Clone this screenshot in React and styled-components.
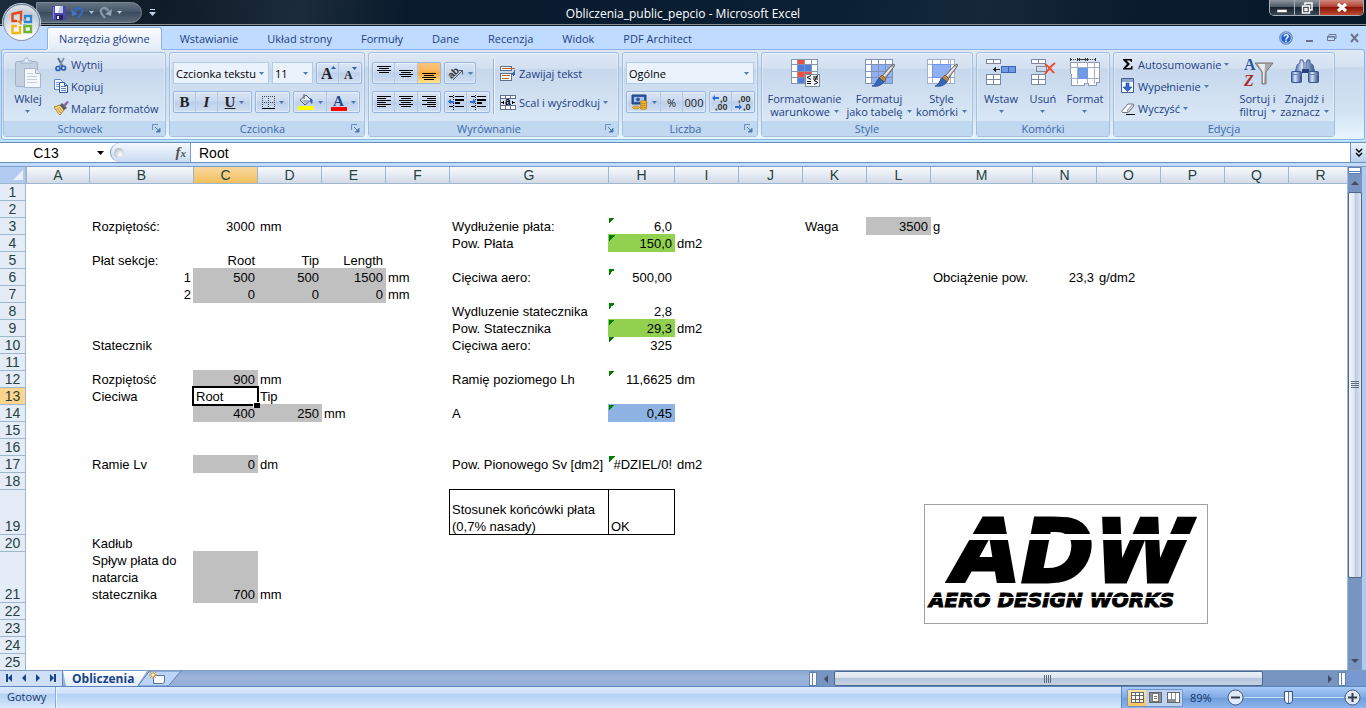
import React from "react";
import styled, { createGlobalStyle, css } from "styled-components";

const GlobalStyle = createGlobalStyle`
  * { box-sizing: border-box; }
  body { margin: 0; background: #fff; }
  button, input, select {
    font-family: inherit;
    font-size: inherit;
    color: inherit;
    margin: 0;
    padding: 0;
    border: 0;
    background: none;
    border-radius: 0;
  }
  svg { display: block; flex: none; }
`

const Window = styled.div`
  display: flex;
  flex-direction: column;
  height: 100vh;
  min-height: 600px;
  overflow: hidden;
  font-family: "Open Sans", "Noto Sans", sans-serif;
  font-size: 11px;
  line-height: 13px;
  color: #1e3f85;
  background: #bfdbff;
`

/* ---------- title bar ---------- */

const TitleBar = styled.header`
  position: relative;
  display: grid;
  grid-template-columns: 1fr auto 1fr;
  align-items: start;
  height: 26px;
  border-bottom: 1px solid #111a22;
  box-shadow: inset 0 -1px #8b8f92;
  background: linear-gradient(100deg, #1d2c3b 0, #0e1b28 12%, #1c2b3a 22%, #081a2c 30%, #0a1f33 60%, #14283a 72%, #081b2d 84%, #071a2c 100%);
`

const OfficeButton = styled.button`
  position: absolute;
  z-index: 2;
  left: 3px;
  top: 4px;
  width: 37px;
  height: 37px;
  display: flex;
  align-items: center;
  justify-content: center;
  border: 1px solid #8393a8;
  border-radius: 50%;
  background: radial-gradient(circle at 50% 95%, #fff 0, #eef2f7 35%, #c3ccd7 70%, #f4f6f9 100%);
  box-shadow: 0 0 0 1px #c9d7e8;
`

const QuickAccess = styled.div`
  display: flex;
  align-items: flex-start;
  padding: 2px 0 0 36px;
`

const QuickPill = styled.div`
  display: flex;
  align-items: center;
  gap: 5px;
  width: 106px;
  height: 21px;
  padding-left: 15px;
  border: 1px solid #7d8892;
  border-radius: 0 11px 11px 0;
  background: linear-gradient(#667584, #46576a 45%, #3b4c5f 50%, #5a6978);
`

const QuickMore = styled.button`
  margin: 7px 0 0 7px;
`

const Title = styled.h1`
  margin: 0;
  padding-top: 7px;
  font-size: 12px;
  font-weight: 400;
  line-height: 13px;
  color: #fff;
`

const WindowButtons = styled.div`
  justify-self: end;
  display: flex;
  height: 16px;
  margin-right: 2px;
  border: 1px solid #a7afb8;
  border-top: 0;
  border-radius: 0 0 5px 5px;
  overflow: hidden;
`

const WindowButton = styled.button`
  display: flex;
  align-items: center;
  justify-content: center;
  width: ${p => p.$close ? 43 : 25}px;
  border-right: ${p => p.$close ? 0 : 1}px solid #a7afb8;
  background: ${p => p.$close
    ? 'linear-gradient(#d08a80, #b4402f 45%, #8a1608 50%, #c04a30)'
    : 'linear-gradient(#8d969f, #4c5966 45%, #17232f 50%, #3a4855)'};
`

/* ---------- ribbon ---------- */

const TabBar = styled.nav`
  display: flex;
  align-items: flex-end;
  gap: 1px;
  height: 23px;
  padding: 0 6px 0 47px;
  background: #bfdbff;
`

const Tab = styled.button`
  height: 22px;
  padding: 0 ${p => p.$pad}px;
  ${p => p.$active && css`
    position: relative;
    z-index: 1;
    margin-right: 3px;
    border: 1px solid #8db2e3;
    border-bottom: 0;
    border-radius: 3px 3px 0 0;
    background: linear-gradient(#fafcff, #e3ecf8);
    box-shadow: 0 1px #e3ecf8, inset 1px 1px #fff;
  `}
`

const TabIcons = styled.div`
  display: flex;
  align-items: center;
  gap: 13px;
  height: 22px;
  margin-left: auto;
`

const Ribbon = styled.div`
  display: flex;
  gap: 3px;
  height: 91px;
  margin: 0 1px;
  padding: 2px 1px;
  border: 1px solid #8db2e3;
  border-radius: 3px;
  background: linear-gradient(#e0eaf6, #d5e2f1 18%, #c7d8ed 20%, #d3e3f3 70%, #e7f6fe);
  box-shadow: 0 1px #b4f0f8;
`

const GroupBox = styled.section`
  flex: none;
  display: flex;
  flex-direction: column;
  width: ${p => p.$width}px;
  height: 85px;
  border: 1px solid #a3c0de;
  border-radius: 3px;
  box-shadow: inset 0 0 0 1px #ffffff55;
  background: linear-gradient(#dde8f5, #d3e0f0 18%, #c7d8ed 20%, #d8e7f5 80%);
`

const GroupBody = styled.div`
  flex: 1;
  display: flex;
  padding: 0 3px;
`

const GroupLabel = styled.div`
  display: flex;
  align-items: center;
  justify-content: center;
  height: 15px;
  padding: 0 4px;
  color: #3e6aaa;
  background: #c0d8f0;
  span { flex: 1; text-align: center; }
`

const BigBtn = styled.button`
  display: flex;
  flex-direction: column;
  align-items: center;
  gap: 3px;
  width: ${p => p.$width}px;
  padding-top: 4px;
  line-height: 13px;
  white-space: nowrap;
  color: #1e3f85;
`

const BigLabel = styled.span`
  display: flex;
  flex-direction: column;
  align-items: center;
  span { display: flex; align-items: center; gap: 4px; min-height: 12px; }
`

const SmallList = styled.div`
  display: flex;
  flex-direction: column;
  padding-left: ${p => p.$left}px;
  width: ${p => p.$width}px;
`

const SmallBtn = styled.button`
  display: flex;
  align-items: center;
  gap: ${p => p.$gap || 3}px;
  height: 22px;
  white-space: nowrap;
`

const Rows = styled.div`
  display: flex;
  flex-direction: column;
  gap: 7px;
  padding-top: 9px;
`

const ToolRow = styled.div`
  display: flex;
  gap: 3px;
  height: 22px;
`

const Strip = styled.div`
  display: flex;
  height: 22px;
  border: 1px solid #98b6de;
  border-radius: 2px;
  background: linear-gradient(#dbe6f5, #c9d9ef 45%, #bdd0ea 50%, #cfdff2);
  box-shadow: inset 0 0 0 1px #ffffff66;
`

const ToolBtn = styled.button`
  display: flex;
  align-items: center;
  justify-content: center;
  gap: 4px;
  width: ${p => p.$width || 22}px;
  color: #222;
  ${p => p.$sep && css`border-right: 1px solid #b1c8e6;`}
  ${p => p.$on && css`background: linear-gradient(#f6c480, #fdb55a 40%, #fba537 50%, #ffe58e);`}
`

const Glyph = styled.span`
  font-family: "Liberation Serif", serif;
  font-size: 15px;
  line-height: 16px;
  font-weight: 700;
  font-style: ${p => p.$italic ? 'italic' : 'normal'};
  text-decoration: ${p => p.$under ? 'underline' : 'none'};
  color: #222;
`

const Combo = styled.label`
  display: flex;
  align-items: center;
  width: ${p => p.$width}px;
  height: 22px;
  padding: 0 4px 0 2px;
  border: 1px solid #b3cbe8;
  background: #eaf2fb;
  color: #000;
  select {
    flex: 1;
    min-width: 0;
    appearance: none;
    outline: 0;
    overflow: hidden;
  }
`

const Divider = styled.div`
  width: 1px;
  height: 55px;
  margin: 6px 6px 0 3px;
  background: #9ab4d4;
  box-shadow: 1px 0 #eef5fc;
`

/* ---------- formula bar ---------- */

const FormulaBar = styled.div`
  display: flex;
  height: 21px;
  margin-top: 2px;
  border-top: 1px solid #6b90bc;
  border-bottom: 1px solid #6b90bc;
  background: #fff;
  font-family: "Liberation Sans", Arial, sans-serif;
  font-size: 14px;
  color: #000;
`

const NameBox = styled.label`
  display: flex;
  align-items: center;
  width: 110px;
  padding-right: 6px;
  input { flex: 1; min-width: 0; padding-right: 5px; text-align: center; outline: 0; }
`

const FxBox = styled.div`
  display: flex;
  align-items: center;
  justify-content: space-between;
  width: 81px;
  padding: 0 4px 0 3px;
  border: solid #7f9dc4;
  border-width: 0 1px;
  border-radius: 10px 0 0 10px;
  background: linear-gradient(#f4f8fd, #c9dbf2);
`

const Knob = styled.span`
  width: 10px;
  height: 10px;
  border-radius: 50%;
  background: radial-gradient(circle at 60% 65%, #fff, #b0b8c4 80%);
`

const Fx = styled.button`
  font-family: "Liberation Serif", serif;
  font-style: italic;
  font-weight: 700;
  font-size: 15px;
  color: #555;
  small { font-size: 11px; }
`

const FormulaInput = styled.input`
  flex: 1;
  min-width: 0;
  padding-left: 8px !important;
  outline: 0;
`

const ExpandBtn = styled.button`
  display: flex;
  align-items: center;
  justify-content: center;
  width: 16px;
  border-left: 1px solid #6b90bc !important;
  background: linear-gradient(#eaf2fc, #b9d0ee) !important;
`

/* ---------- sheet ---------- */

const SheetArea = styled.div`
  flex: 1;
  display: flex;
  min-height: 0;
  margin-top: 3px;
  border-top: 1px solid #7f9dc4;
`

const SheetPane = styled.main`
  position: relative;
  flex: 1;
  min-width: 0;
  overflow: hidden;
  background: #fff;
`

const Sheet = styled.table`
  width: 100%;
  min-width: 1352px;
  table-layout: fixed;
  border-collapse: separate;
  border-spacing: 0;
  font-family: "Liberation Sans", Arial, sans-serif;
  font-size: 13px;
  line-height: 17px;
  color: #000;
`

const Col = styled.col`
  width: ${p => p.$width ? p.$width + 'px' : 'auto'};
`

const ColHead = styled.th`
  height: 17px;
  padding: 0;
  font-size: 14px;
  line-height: 16px;
  font-weight: 400;
  color: #27413e;
  border-left: 1px solid #9eb6ce;
  border-bottom: 1px solid #9eb6ce;
  background: ${p => p.$active ? 'linear-gradient(#f9d99f, #f1c15f)' : 'linear-gradient(#f8fafc, #d3dbe9)'};
`

const Corner = styled.th`
  padding: 0;
  border-right: 1px solid #9eb6ce;
  border-bottom: 1px solid #9eb6ce;
  background: #b3cbee;
  svg { margin: 0 2px 0 auto; }
`

const RowHead = styled.th`
  padding: 0;
  vertical-align: bottom;
  font-size: 14px;
  line-height: 16px;
  font-weight: 400;
  color: #27413e;
  border-right: 1px solid #9eb6ce;
  border-bottom: 1px solid #9eb6ce;
  background: ${p => p.$active ? '#ffd58d' : '#e4ecf7'};
`

const fills = { grey: '#c0c0c0', green: '#92d050', blue: '#8db4e3' }

const Cell = styled.td`
  position: ${p => p.$selected ? 'relative' : 'static'};
  height: ${p => p.$height}px;
  padding: 0 2px 0 3px;
  vertical-align: bottom;
  white-space: nowrap;
  text-align: ${p => p.$right ? 'right' : 'left'};
  ${p => p.$fill && css`
    background-color: ${fills[p.$fill]};
    box-shadow: 0 -1px ${fills[p.$fill]}, 1px 0 ${fills[p.$fill]}, 1px -1px ${fills[p.$fill]};
  `}
  ${p => p.$flag && css`
    background-image: linear-gradient(135deg, #008000 50%, transparent 50%);
    background-size: 6px 6px;
    background-position: 1px 0;
    background-repeat: no-repeat;
  `}
  ${p => p.$boxed && css`
    box-shadow: inset 1px 0 #000, 0 -1px #000, inset 0 -1px #000, 1px 0 #000, 1px -1px #000;
  `}
  ${p => p.$selected && css`
    &::before {
      content: "";
      position: absolute;
      inset: -2px -2px -1px -1px;
      border: 2px solid #000;
    }
    &::after {
      content: "";
      position: absolute;
      right: -3px;
      bottom: -3px;
      width: 6px;
      height: 5px;
      border: solid #fff;
      border-width: 1px 0 0 1px;
      background: #000;
    }
  `}
`

const LogoCard = styled.figure`
  position: absolute;
  left: 924px;
  top: 337px;
  width: 284px;
  height: 120px;
  margin: 0;
  padding: 9px 0 0 4px;
  border: 1px solid #a0a0a0;
  background: #fff;
  color: #000;
  font-family: "DejaVu Sans", Verdana, sans-serif;
  font-weight: 700;
  font-style: italic;
  white-space: nowrap;
`

const LogoBig = styled.div`
  position: relative;
  padding-left: 24px;
  font-size: 88px;
  line-height: 76px;
  -webkit-text-stroke: 3px #000;
  &::after {
    content: "";
    position: absolute;
    left: 0;
    right: 2px;
    top: 20px;
    height: 6px;
    background: #fff;
  }
`

const LogoSmall = styled.div`
  position: relative;
  font-size: 20px;
  line-height: 20px;
  -webkit-text-stroke: 1px #000;
  &::after {
    content: "";
    position: absolute;
    left: 0;
    right: 2px;
    top: 7px;
    height: 1px;
    background: #fff;
  }
`

const VScroll = styled.div`
  display: flex;
  flex-direction: column;
  align-items: center;
  width: 19px;
  padding-right: 5px;
  border-left: 1px solid #9fb9dd;
  background: linear-gradient(to right, #7795c0 14px, #b0c9ee 14px);
`

const SplitV = styled.span`
  width: 13px;
  height: 7px;
  border: 1px solid #5f84b4;
  background: linear-gradient(#fff 3px, #5b82b8 3px, #5b82b8 4px, #fff 4px);
`

const ScrollBtn = styled.button`
  display: flex;
  align-items: center;
  justify-content: center;
  width: ${p => p.$side ? 17 : 13}px;
  height: ${p => p.$side ? 15 : 18}px;
`

const VTrack = styled.div`
  flex: 1;
  display: flex;
  width: 14px;
`

const VThumb = styled.div`
  display: flex;
  align-items: center;
  justify-content: center;
  width: 14px;
  height: 84%;
  border: 1px solid #4f6688;
  border-radius: 2px;
  background: linear-gradient(to right, #f3f6fb, #dde6f1 45%, #b9c8de 50%, #dfe7f2);
`

/* ---------- bottom bars ---------- */

const SheetTabs = styled.div`
  display: flex;
  flex: none;
  height: 17px;
  border-top: 1px solid #7f9dc4;
  border-bottom: 1px solid #5d86bd;
  background: linear-gradient(#8aa6d2, #9db5dc 40%, #94aed8);
`

const NavButtons = styled.div`
  display: flex;
  align-items: center;
  justify-content: space-around;
  width: 63px;
  padding: 0 2px;
  border-right: 1px solid #5d86bd;
  background: #cfdff5;
`

const SheetTab = styled.button`
  width: 84px;
  margin-right: -9px !important;
  padding: 0 12px 0 9px !important;
  font-size: 12px !important;
  font-weight: 700;
  line-height: 15px;
  text-align: left;
  color: #16438c !important;
  background: linear-gradient(#fff, #e3edfa) !important;
  clip-path: polygon(0 0, 100% 0, calc(100% - 10px) 100%, 3px 100%);
`

const NewSheet = styled.button`
  display: flex;
`

const HScroll = styled.div`
  display: flex;
  align-items: center;
  width: 537px;
  height: 15px;
  margin-left: auto;
  background: #7795c0;
`

const SplitH = styled.span`
  width: 8px;
  height: 14px;
  border: 1px solid #5f84b4;
  background: linear-gradient(to right, #fff 2px, #5b82b8 2px, #5b82b8 3px, #fff 3px);
`

const HTrack = styled.div`
  flex: 1;
  display: flex;
`

const HThumb = styled.div`
  display: flex;
  align-items: center;
  justify-content: center;
  width: 88%;
  height: 15px;
  border: 1px solid #4f6688;
  border-radius: 2px;
  background: linear-gradient(#eef2f8, #d9e2ee 45%, #b5c5da 50%, #c6d3e4);
`

const CornerGap = styled.div`
  width: 20px;
  background: #7798d0;
`

const StatusBar = styled.footer`
  display: flex;
  flex: none;
  height: 21px;
  color: #16336b;
  background: linear-gradient(#dbe9fb, #cfe1f9 30%, #b3d0f5 34%, #c7defa 75%, #dcebfd);
`

const StatusText = styled.div`
  width: 56px;
  padding-left: 7px;
  line-height: 20px;
  border-right: 1px solid #86abdf;
  box-shadow: 1px 0 #eff6fe;
`

const StatusRight = styled.div`
  display: flex;
  align-items: center;
  margin-left: auto;
  width: 245px;
  padding: 0 5px;
  border-left: 1px solid #5f86bd;
  background: linear-gradient(#a9cbf8, #7ea9e3 50%, #6f9ddb 52%, #8cb5ee);
`

const ViewButtons = styled.div`
  display: flex;
  width: 56px;
  height: 18px;
  border: 1px solid #6f93c7;
  border-radius: 2px;
`

const ViewBtn = styled.button`
  flex: 1;
  display: flex;
  align-items: center;
  justify-content: center;
  background: ${p => p.$on ? 'linear-gradient(#fce2ad, #fdc45c)' : '#bcd3f2'} !important;
`

const ZoomText = styled.span`
  width: 44px;
  padding-left: 7px;
`

const ZoomSlider = styled.input.attrs({ type: 'range' })`
  flex: 1;
  min-width: 0;
  height: 16px;
  appearance: none;
  background: linear-gradient(#c9dcf5, #c9dcf5) center / 100% 1px no-repeat !important;
  &::-webkit-slider-thumb {
    appearance: none;
    width: 9px;
    height: 13px;
    border: 1px solid #35547f;
    border-radius: 1px 1px 5px 5px;
    background: linear-gradient(to right, #fff 3px, #5d80b3 3px, #5d80b3 4px, #dfe9f6 4px);
  }
`

const ZoomBtn = styled.button`
  display: flex;
`

/* ---------- icons ---------- */

const Arrow = ({ color = '#5279b5' }) => (
  <svg width="5" height="3" viewBox="0 0 5 3"><path d="M0 0h5L2.500 3z" fill={color} /></svg>
)

const Launcher = () => (
  <svg width="9" height="9" viewBox="0 0 9 9">
    <path d="M.5 6V.5H6" fill="none" stroke="#6a8fc0" />
    <path d="M3 3l4 4M8 4v4H4" fill="none" stroke="#4f78b0" />
    <path d="M8 4v4H4z" fill="#4f78b0" />
  </svg>
)

const Triangle = ({ dir, color = '#414c62' }) => {
  const d = { up: 'M0 6h8L4 2z', down: 'M0 2h8L4 6z', left: 'M6 0v8L2 4z', right: 'M2 0v8l4-4z' }[dir]
  return <svg width="8" height="8" viewBox="0 0 8 8"><path d={d} fill={color} /></svg>
}

const OfficeLogo = () => (
  <svg width="26" height="26" viewBox="0 0 26 26" fill="none" strokeWidth="2.400">
    <path d="M8 11H3.500V4L12 2v9" stroke="#e2481c" />
    <path d="M16 6h6v6h-6z" stroke="#2f86cf" />
    <path d="M8 16H3.500v7H11v-7" stroke="#f5b617" />
    <path d="M15.500 16H22v6h-6.500z" stroke="#6fb52c" />
    <path d="M8.500 11.500h3v3" stroke="#ef7a1a" strokeWidth="2" />
    <path d="M14 10h3M14 15h3" stroke="#7fb3d8" strokeWidth="1.500" />
  </svg>
)

const SaveIcon = () => (
  <svg width="14" height="14" viewBox="0 0 14 14">
    <path d="M0 0h14v14H1L0 13z" fill="#4c47ad" />
    <path d="M3 0h8v7H3z" fill="#f4f6ff" />
    <path d="M8 0h3v7H6z" fill="#b9c4ea" />
    <path d="M4 9h7v5H4z" fill="#23225e" />
    <path d="M5 10h2v3H5z" fill="#dfe4f5" />
    <path d="M1 1h1v12H1z" fill="#8a86da" />
  </svg>
)

const UndoIcon = ({ redo }) => (
  <svg width="13" height="13" viewBox="0 0 13 13">
    <g transform={redo ? 'translate(13 0) scale(-1 1)' : undefined}>
      <path d="M4 5c2-5 8-3 7 1-.5 2.500-2 4-4 6" fill="none" stroke={redo ? '#8597ab' : '#3767bd'} strokeWidth="2.400" />
      <path d="M0 3l1 7 6-2z" fill={redo ? '#93a4b7' : '#4274cb'} />
    </g>
  </svg>
)

const MoreIcon = () => (
  <svg width="7" height="8" viewBox="0 0 7 8"><path d="M1 0h5v1H1zM0 3h7L3.500 7z" fill="#c3d5ea" /></svg>
)

const PasteIcon = () => (
  <svg width="32" height="32" viewBox="0 0 32 32">
    <rect x="3.500" y="4.500" width="22" height="25" rx="2" fill="#c3d1e2" stroke="#9fb1c8" />
    <path d="M9 6V4h3c0-4 5-4 5 0h3v2z" fill="#e4ebf4" stroke="#9fb1c8" />
    <path d="M12.500 11.500h11l5 5v14h-16z" fill="#f4f7fb" stroke="#a5b5ca" />
    <path d="M23.500 11.500v5h5" fill="#dbe4ef" stroke="#a5b5ca" />
    <path d="M15 16.500h6M15 19.500h10M15 22.500h10M15 25.500h10" stroke="#c3cfde" />
  </svg>
)

const CutIcon = () => (
  <svg width="15" height="15" viewBox="0 0 15 15" fill="none">
    <path d="M4 1l5 9" stroke="#5a6b84" strokeWidth="1.800" />
    <path d="M10 1L5 10" stroke="#8396b1" strokeWidth="1.800" />
    <circle cx="4" cy="11.500" r="2" stroke="#2f5fb3" strokeWidth="1.700" />
    <circle cx="9.500" cy="11" r="2" stroke="#2f5fb3" strokeWidth="1.700" />
  </svg>
)

const CopyIcon = () => (
  <svg width="15" height="14" viewBox="0 0 15 14">
    <path d="M.5.500h6l2 2v8h-8z" fill="#f3f8ff" stroke="#5f86c4" />
    <path d="M2 3.500h4M2 5.500h4M2 7.500h4" stroke="#7ba0d8" />
    <path d="M5.500 3.500h5l3 3v7h-8z" fill="#fff" stroke="#2f5aa5" />
    <path d="M7 7.500h5M7 9.500h5M7 11.500h5" stroke="#4f83d2" />
    <path d="M10.500 3.500v3h3" fill="#bcd3f5" stroke="#2f5aa5" />
  </svg>
)

const PainterIcon = () => (
  <svg width="15" height="14" viewBox="0 0 15 14">
    <path d="M0 6l6-2 4 5-4 5C4 12 2 9 0 6z" fill="#f3d680" stroke="#a8853a" />
    <path d="M3 7l4 5M5 6l3 4" stroke="#c59b42" />
    <path d="M6 4l2-2 5 5-3 2z" fill="#5a5a66" />
    <path d="M9 4l4-4 2 1-4 5z" fill="#8c6a9c" />
  </svg>
)

const AlignIcon = ({ kind, v = 'middle' }) => {
  const sets = {
    left: [[0, 14], [0, 9], [0, 14], [0, 9], [0, 14], [0, 9]],
    center: [[0, 14], [2, 10], [0, 14], [2, 10], [0, 14], [2, 10]],
    right: [[0, 14], [5, 9], [0, 14], [5, 9], [0, 14], [5, 9]],
    lines: [[0, 14], [2, 10], [0, 14], [2, 10]]
  }
  const top = kind !== 'lines' ? 1 : { top: 0, middle: 4, bottom: 7 }[v]
  return (
    <svg width="14" height="15" viewBox="0 0 14 15" shapeRendering="crispEdges">
      {sets[kind].map(([x, w], i) => <rect key={i} x={x} y={top + i * 2} width={w} height="1" fill="#000" />)}
    </svg>
  )
}

const IndentIcon = ({ out }) => (
  <svg width="16" height="15" viewBox="0 0 16 15" shapeRendering="crispEdges">
    <path d="M7 1h9v1H7zM7 4h9v2H7zM7 7h5v2H7zM7 11h9v1H7zM1 1h4v1H1zM1 11h4v1H1z" fill="#000" />
    <path d="M5.500 0v15" stroke="#000" strokeDasharray="1 1" />
    <path d={out ? 'M0 6.500l3-3v2h3v2H3v2z' : 'M6 6.500L3 3.500v2H0v2h3v2z'} fill="#2f6bd6" />
  </svg>
)

const OrientIcon = () => (
  <svg width="16" height="18" viewBox="0 0 16 18">
    <text x="0" y="11" transform="rotate(-45 7 9)" fontFamily="Liberation Sans, sans-serif" fontWeight="700" fontSize="10" fill="#333">ab</text>
    <path d="M5 16l9-9M14.500 6.500h-4M14.500 6.500v4" fill="none" stroke="#555" />
  </svg>
)

const WrapIcon = () => (
  <svg width="16" height="15" viewBox="0 0 16 15" shapeRendering="crispEdges">
    <path d="M.5.500h11v4H.5zM.5 7.500h11v7H.5z" fill="#fff" stroke="#5d6f8a" />
    <path d="M2 2h13v1H2zM2 9h8v1H2zM2 12h7v1H2z" fill="#b5662c" />
    <path d="M14.500 4v4H12" fill="none" stroke="#3b63a8" />
    <path d="M11 8l3-2v4z" fill="#3b63a8" />
  </svg>
)

const MergeIcon = () => (
  <svg width="16" height="15" viewBox="0 0 16 15" shapeRendering="crispEdges">
    <path d="M.5.500h15v14H.5z" fill="#fff" stroke="#5f7390" />
    <path d="M0 3.500h16v7H0z" fill="#d6e3f7" stroke="#5f7390" />
    <path d="M5.500 0v3M10.500 0v3M5.500 11v4M10.500 11v4" stroke="#5f7390" />
    <path d="M1 7.500h3M12 7.500h3M3 6v3M12 6v3" stroke="#000" />
    <text x="5" y="10" fontFamily="Liberation Sans, sans-serif" fontWeight="700" fontSize="10" fill="#000">a</text>
  </svg>
)

const BorderIcon = () => (
  <svg width="13" height="13" viewBox="0 0 13 13" shapeRendering="crispEdges">
    <path d="M.5 0v12M6.500 0v12M12.500 0v12M0 .5h13M0 6.500h13" stroke="#444" strokeDasharray="1 1" fill="none" />
    <path d="M0 12h13v1H0z" fill="#000" />
  </svg>
)

const FillIcon = () => (
  <svg width="16" height="16" viewBox="0 0 16 16">
    <path d="M2 6l6-5 5 5-6 5z" fill="#e8eef7" stroke="#4c5c78" />
    <path d="M4 6h8l-5 4z" fill="#9fb3d1" />
    <path d="M6 0v5" stroke="#4c5c78" />
    <path d="M12 4c3 1 3 3 2 6-2-1-2-3-2-6z" fill="#2f62b8" />
    <path d="M0 12h16v4H0z" fill="#ff0" />
  </svg>
)

const FontColorIcon = () => (
  <svg width="16" height="17" viewBox="0 0 16 17">
    <text x="2" y="12" fontFamily="Liberation Serif, serif" fontWeight="700" fontSize="15" fill="#27478c">A</text>
    <path d="M0 13h16v4H0z" fill="#f00" />
  </svg>
)

const GrowIcon = ({ shrink }) => (
  <svg width="16" height="18" viewBox="0 0 16 18">
    <text x={shrink ? 2 : 1} y="15" fontFamily="Liberation Serif, serif" fontWeight="700" fontSize={shrink ? 12 : 16} fill="#222">A</text>
    <path d={shrink ? 'M10 3h5l-2.500 3z' : 'M11 5h5l-2.500-3z'} fill="#2c5bb0" />
  </svg>
)

const MoneyIcon = () => (
  <svg width="17" height="16" viewBox="0 0 17 16">
    <path d="M1 1h14v9H1z" fill="#315aa8" stroke="#213f7c" />
    <path d="M3 3h10v5H3z" fill="#a9c3ee" />
    <circle cx="7" cy="5.500" r="2" fill="#315aa8" />
    <g fill="#f4b93a" stroke="#9a6b12" strokeWidth=".6">
      <ellipse cx="12.500" cy="14" rx="3.500" ry="1.500" />
      <ellipse cx="12.500" cy="12" rx="3.500" ry="1.500" />
      <ellipse cx="12.500" cy="10" rx="3.500" ry="1.500" />
      <ellipse cx="12.500" cy="8" rx="3.500" ry="1.500" />
      <ellipse cx="5" cy="13.500" rx="3.500" ry="1.500" />
    </g>
  </svg>
)

const DecimalIcon = ({ less }) => (
  <svg width="17" height="17" viewBox="0 0 17 17" fontFamily="Liberation Sans, sans-serif" fontWeight="700" fontSize="9" fill="#333">
    <text x={less ? 3 : 8} y="8">{less ? ',00' : ',0'}</text>
    <text x={less ? 8 : 3} y="16">{less ? ',0' : ',00'}</text>
    <path d={less ? 'M7 13L4 10v2H0v2h4v2z' : 'M0 4l3-3v2h4v2H3v2z'} fill="#2f6bd6" />
  </svg>
)

const CondIcon = () => (
  <svg width="32" height="32" viewBox="0 0 32 32" shapeRendering="crispEdges">
    <path d="M2 2h27v25H2z" fill="#fff" />
    <path d="M9 2h7v5H9zM9 15h14v6H9z" fill="#ef4f3c" />
    <path d="M9 8h13v6H9zM9 21h6v6H9z" fill="#4f7ee0" />
    <path d="M2.500 2v25M8.500 2v25M15.500 2v25M22.500 2v25M28.500 2v25M2 2.500h27M2 7.500h27M2 14.500h27M2 20.500h27M2 26.500h27" stroke="#8796ae" fill="none" />
    <path d="M16.500 17.500h14v12h-14z" fill="#f2f4f8" stroke="#7f8ba0" />
    <g shapeRendering="auto" stroke="#111" fill="none">
      <path d="M22 18.500l-4 2 4 2M18 24.500h4M18 26.500h4M24 20h5M24 22h5M28.500 18l-3 6M25 23.500l4 2-4 2" />
    </g>
  </svg>
)

const Brush = () => (
  <g shapeRendering="auto">
    <path d="M31 7c1 1 0 3-1 4l-8 11-3-3L28 9z" fill="#b5b3b0" stroke="#55524e" strokeWidth=".8" />
    <path d="M29 10l-8 9" stroke="#f2f0ec" strokeWidth="1.200" />
    <path d="M19 18l4 4-2 3-5-4z" fill="#b98b46" stroke="#6f5020" strokeWidth=".8" />
    <path d="M16 21l5 4c-3 4-8 5-12 4 4-1 4-5 7-8z" fill="#3567b8" stroke="#234a8c" strokeWidth=".8" />
  </g>
)

const FormatTableIcon = () => (
  <svg width="32" height="32" viewBox="0 0 32 32" shapeRendering="crispEdges">
    <path d="M2 2h28v25H2z" fill="#fff" />
    <path d="M9 8h21v19H9z" fill="#8fb1f4" />
    <path d="M2.500 2v25M8.500 2v25M15.500 2v25M22.500 2v25M29.500 2v25M2 2.500h28M2 7.500h28M2 14.500h28M2 20.500h28M2 26.500h28" stroke="#7f93b8" fill="none" />
    <Brush />
  </svg>
)

const CellStyleIcon = () => (
  <svg width="32" height="32" viewBox="0 0 32 32" shapeRendering="crispEdges">
    <path d="M1 2h28v25H1z" fill="#fff" />
    <path d="M1.500 2v25M6.500 2v25M14.500 2v5M22.500 2v5M14.500 20v7M24.500 2v25M28.500 2v25M1 2.500h28M1 7.500h28M1 20.500h28M1 26.500h28" stroke="#a3b0c6" fill="none" />
    <path d="M6.500 7.500h18v13h-18z" fill="#8fb1f4" stroke="#6f95e8" />
    <Brush />
  </svg>
)

const InsertIcon = () => (
  <svg width="32" height="32" viewBox="0 0 32 32" shapeRendering="crispEdges">
    <path d="M1.500 2.500h14v4h-14zM8.500 2v5M1.500 17.500h14v10h-14zM8.500 17v11M1 22.500h15" fill="#fff" stroke="#7a87a0" />
    <path d="M16.500 9.500h14v6h-14zM23.500 9v7" fill="#6f9ae8" stroke="#3d62ae" />
    <path d="M8 12.500h7M9.500 11v3M10.500 10v5" stroke="#222" />
  </svg>
)

const DeleteIcon = () => (
  <svg width="32" height="32" viewBox="0 0 32 32">
    <path d="M4.500 2.500h14v4h-14zM11.500 2v5M4.500 17.500h14v10h-14zM11.500 17v11M4 22.500h15" fill="#fff" stroke="#7a87a0" />
    <path d="M9.500 9.500h10v5h-10z" fill="none" stroke="#333" strokeDasharray="1 1" />
    <path d="M18 7c3 2 6 5 9 9M28 6c-4 3-7 7-10 11" fill="none" stroke="#f0492c" strokeWidth="2" />
  </svg>
)

const FormatIcon = () => (
  <svg width="32" height="32" viewBox="0 0 32 32" shapeRendering="crispEdges">
    <path d="M1.500 1v3M8.500 1v3M18.500 1v3M26.500 1v3M8 2.500h11M10.500 1v3M16.500 1v3" stroke="#333" />
    <path d="M2 2.500h6M19 2.500h7" stroke="#333" strokeDasharray="1 1" />
    <path d="M1.500 5.500h29v20h-3v3h-8v-2h-4v2h-13z" fill="#fff" stroke="#8d99af" />
    <path d="M1 10.500h29M1 21.500h29M8.500 5v22M18.500 5v22M25.500 5v22" stroke="#a5afc2" />
    <path d="M9 11h10v11H9z" fill="#6f9ae8" />
  </svg>
)

const SumIcon = () => (
  <svg width="14" height="14" viewBox="0 0 14 14">
    <path d="M2 2h9v3h-1L9 3.500H5.500L9 7l-4 4h4.500L10.500 9h1v3.500H2v-1L6 7 2 3z" fill="#000" />
  </svg>
)

const FillDownIcon = () => (
  <svg width="14" height="16" viewBox="0 0 14 16">
    <path d="M.5.500h12v14H.5z" fill="#f4f8ff" stroke="#3e5f9a" />
    <path d="M1 1h11v3H1z" fill="#8ea6cd" />
    <path d="M5 5h3v4h3l-4.500 4.500L2 9h3z" fill="#2f6bd6" stroke="#1d478f" strokeWidth=".6" />
  </svg>
)

const EraserIcon = () => (
  <svg width="14" height="13" viewBox="0 0 14 13">
    <path d="M.8 9L7 2h5c1 0 1 2 0 3L7 10.500H2c-1 0-1.500-1-1.200-1.500z" fill="#fff" stroke="#6c7486" />
    <path d="M7 10.500L12 5c1-1 .5-2.500 0-3L6.500 8z" fill="#d3d8e2" stroke="#6c7486" strokeWidth=".7" />
    <path d="M5 12.500h9" stroke="#000" />
  </svg>
)

const SortIcon = () => (
  <svg width="32" height="32" viewBox="0 0 32 32" fontFamily="Liberation Serif, serif" fontWeight="700" fontSize="16">
    <text x="2" y="13" fill="#2a52a8">A</text>
    <text x="2" y="29" fill="#a62e26" fontStyle="italic">Z</text>
    <path d="M13 6h18l-7 9v12h-4V15z" fill="#a9a9a9" stroke="#77777a" />
    <path d="M16 7h7l-1 19h-1V15z" fill="#ededee" />
  </svg>
)

const FindIcon = () => (
  <svg width="32" height="32" viewBox="0 0 32 32">
    <defs>
      <linearGradient id="binocular" x1="0" x2="1" y1="0" y2="0">
        <stop offset="0" stopColor="#4466a4" />
        <stop offset=".35" stopColor="#d7e3f6" />
        <stop offset="1" stopColor="#2c4a86" />
      </linearGradient>
    </defs>
    <path d="M11 3h3v2h1v9l-2 2H6l2-8 3-2zM18 3h3v3l3 2 2 8h-7l-2-2V5h1z" fill="url(#binocular)" stroke="#4c69a3" />
    <path d="M13 12h7v4h-7z" fill="#27437c" />
    <rect x="2.500" y="14.500" width="10" height="11" rx="1" fill="url(#binocular)" stroke="#3a5690" />
    <rect x="19.500" y="14.500" width="10" height="11" rx="1" fill="url(#binocular)" stroke="#3a5690" />
    <path d="M3 17.500h9M20 17.500h9" stroke="#6d88bd" />
  </svg>
)

const HelpIcon = () => (
  <svg width="14" height="14" viewBox="0 0 14 14">
    <circle cx="7" cy="7" r="6.300" fill="#1f5fd0" stroke="#7d8da8" />
    <circle cx="7" cy="7" r="5.300" fill="none" stroke="#dfe9fa" strokeWidth=".8" />
    <text x="4" y="10.500" fontFamily="Liberation Sans, sans-serif" fontSize="10" fontWeight="700" fill="#fff">?</text>
  </svg>
)

const NewSheetIcon = () => (
  <svg width="44" height="15" viewBox="0 0 44 15">
    <path d="M0 15L10 2q1-2 4-2h29L32 13q-1 2-4 2z" fill="#bcd4f5" stroke="#5d86bd" />
    <path d="M15.500 4.500h11v7l-2 1h-9z" fill="#f6f9fe" stroke="#5d7396" />
    <path d="M15 0v8M11 4h8M12 1l6 6M18 1l-6 6" stroke="#e29a2e" />
    <circle cx="15" cy="4" r="1.500" fill="#fff3c4" />
  </svg>
)

const NavIcon = ({ dir, bar }) => (
  <svg width="9" height="9" viewBox="0 0 9 9">
    <g transform={dir === 'right' ? 'translate(9 0) scale(-1 1)' : undefined} fill="#16438c">
      <path d="M7 0v8L3 4z" />
      {bar && <path d="M1 0h2v8H1z" />}
    </g>
  </svg>
)

const ZoomIcon = ({ plus }) => (
  <svg width="17" height="17" viewBox="0 0 17 17">
    <circle cx="8.500" cy="8.500" r="7.500" fill="#dfe9f7" stroke="#45597a" />
    <path d={plus ? 'M4 8.500h9M8.500 4v9' : 'M4 8.500h9'} stroke="#333c4a" strokeWidth="2" />
  </svg>
)

const ViewIcon = ({ kind }) => (
  <svg width="13" height="11" viewBox="0 0 13 11" shapeRendering="crispEdges">
    <path d="M.5.500h12v10H.5z" fill={kind === 'grid' ? '#fff' : '#8a8f98'} stroke="#666" />
    {kind === 'grid' && <path d="M4.500 0v11M8.500 0v11M0 3.500h13M0 7.500h13" stroke="#666" />}
    {kind === 'page' && <path d="M3.500 1.500h6v8h-6zM5 4.500h3M5 6.500h3" fill="#fff" stroke="#777" />}
    {kind === 'break' && <path d="M1 1h3v6H1zM5 1h3v6H5zM9 1h3v9H9z" fill="#fff" />}
  </svg>
)

/* ---------- data ---------- */

const columns = [
  ['A', 63], ['B', 104], ['C', 64], ['D', 64], ['E', 64], ['F', 64], ['G', 159], ['H', 66], ['I', 64],
  ['J', 64], ['K', 64], ['L', 64], ['M', 102], ['N', 64], ['O', 64], ['P', 64], ['Q', 64], ['R', 0]
]

const heights = { 19: 45, 21: 51 }

const r = (t, rest) => ({ t, $right: true, ...rest })

const cells = {
  B3: { t: 'Rozpiętość:' }, C3: r('3000'), D3: { t: 'mm' },
  G3: { t: 'Wydłużenie płata:' }, H3: r('6,0', { $flag: true }),
  K3: { t: 'Waga' }, L3: r('3500', { $fill: 'grey' }), M3: { t: 'g' },
  G4: { t: 'Pow. Płata' }, H4: r('150,0', { $fill: 'green', $flag: true }), I4: { t: 'dm2' },
  B5: { t: 'Płat sekcje:' }, C5: r('Root'), D5: r('Tip'), E5: r('Length'),
  B6: r('1'), C6: r('500', { $fill: 'grey' }), D6: r('500', { $fill: 'grey' }), E6: r('1500', { $fill: 'grey' }), F6: { t: 'mm' },
  G6: { t: 'Cięciwa aero:' }, H6: r('500,00', { $flag: true }),
  M6: { t: 'Obciążenie pow.' }, N6: r('23,3'), O6: { t: 'g/dm2' },
  B7: r('2'), C7: r('0', { $fill: 'grey' }), D7: r('0', { $fill: 'grey' }), E7: r('0', { $fill: 'grey' }), F7: { t: 'mm' },
  G8: { t: 'Wydluzenie statecznika' }, H8: r('2,8', { $flag: true }),
  G9: { t: 'Pow. Statecznika' }, H9: r('29,3', { $fill: 'green', $flag: true }), I9: { t: 'dm2' },
  B10: { t: 'Statecznik' }, G10: { t: 'Cięciwa aero:' }, H10: r('325', { $flag: true }),
  B12: { t: 'Rozpiętość' }, C12: r('900', { $fill: 'grey' }), D12: { t: 'mm' },
  G12: { t: 'Ramię poziomego Lh' }, H12: r('11,6625', { $flag: true }), I12: { t: 'dm' },
  B13: { t: 'Cieciwa' }, C13: { t: 'Root', $selected: true }, D13: { t: 'Tip' },
  C14: r('400', { $fill: 'grey' }), D14: r('250', { $fill: 'grey' }), E14: { t: 'mm' },
  G14: { t: 'A' }, H14: r('0,45', { $fill: 'blue', $flag: true }),
  B17: { t: 'Ramie Lv' }, C17: r('0', { $fill: 'grey' }), D17: { t: 'dm' },
  G17: { t: 'Pow. Pionowego Sv [dm2]' }, H17: r('#DZIEL/0!', { $flag: true }), I17: { t: 'dm2' },
  G19: { t: <>Stosunek końcówki płata<br />(0,7% nasady)</>, $boxed: true }, H19: { t: 'OK', $boxed: true },
  B20: { t: 'Kadłub' },
  B21: { t: <>Spływ płata do<br />natarcia<br />statecznika</> }, C21: r('700', { $fill: 'grey' }), D21: { t: 'mm' }
}

const tabs = [
  ['Narzędzia główne', 11, true], ['Wstawianie', 14], ['Układ strony', 14], ['Formuły', 14],
  ['Dane', 14], ['Recenzja', 14], ['Widok', 14], ['PDF Architect', 14]
]

/* ---------- parts ---------- */

function Group({ label, width, launcher, children }) {
  return (
    <GroupBox $width={width}>
      <GroupBody>{children}</GroupBody>
      <GroupLabel><span>{label}</span>{launcher && <Launcher />}</GroupLabel>
    </GroupBox>
  )
}

function BigButton({ icon, lines, width }) {
  return (
    <BigBtn $width={width}>
      {icon}
      <BigLabel>
        <span>{lines[0]}</span>
        <span>{lines[1]}<Arrow /></span>
      </BigLabel>
    </BigBtn>
  )
}

function SelectBox({ name, value, width }) {
  return (
    <Combo $width={width}>
      <select aria-label={name} defaultValue={value}><option>{value}</option></select>
      <Arrow />
    </Combo>
  )
}

function RibbonBar() {
  return (
    <Ribbon>
      <Group label="Schowek" width={163} launcher>
        <BigButton width={42} icon={<PasteIcon />} lines={['Wklej', '']} />
        <SmallList $width={112} $left={5}>
          <SmallBtn $gap={2}><CutIcon />Wytnij</SmallBtn>
          <SmallBtn $gap={2}><CopyIcon />Kopiuj</SmallBtn>
          <SmallBtn $gap={2}><PainterIcon />Malarz formatów</SmallBtn>
        </SmallList>
      </Group>

      <Group label="Czcionka" width={196} launcher>
        <Rows>
          <ToolRow>
            <SelectBox name="Czcionka" value="Czcionka tekstu" width={96} />
            <SelectBox name="Rozmiar" value="11" width={41} />
            <Strip>
              <ToolBtn $sep aria-label="Zwiększ"><GrowIcon /></ToolBtn>
              <ToolBtn aria-label="Zmniejsz"><GrowIcon shrink /></ToolBtn>
            </Strip>
          </ToolRow>
          <ToolRow>
            <Strip>
              <ToolBtn $sep><Glyph>B</Glyph></ToolBtn>
              <ToolBtn $sep><Glyph $italic>I</Glyph></ToolBtn>
              <ToolBtn $width={33}><Glyph $under>U</Glyph><Arrow /></ToolBtn>
            </Strip>
            <Strip><ToolBtn $width={33} aria-label="Obramowanie"><BorderIcon /><Arrow /></ToolBtn></Strip>
            <Strip>
              <ToolBtn $width={33} $sep aria-label="Wypełnienie"><FillIcon /><Arrow /></ToolBtn>
              <ToolBtn $width={32} aria-label="Kolor czcionki"><FontColorIcon /><Arrow /></ToolBtn>
            </Strip>
          </ToolRow>
        </Rows>
      </Group>

      <Group label="Wyrównanie" width={251} launcher>
        <Rows>
          <ToolRow>
            <Strip>
              <ToolBtn $sep><AlignIcon kind="lines" v="top" /></ToolBtn>
              <ToolBtn $width={23} $sep><AlignIcon kind="lines" /></ToolBtn>
              <ToolBtn $on><AlignIcon kind="lines" v="bottom" /></ToolBtn>
            </Strip>
            <Strip><ToolBtn $width={30}><OrientIcon /><Arrow /></ToolBtn></Strip>
          </ToolRow>
          <ToolRow>
            <Strip>
              <ToolBtn $sep><AlignIcon kind="left" /></ToolBtn>
              <ToolBtn $width={23} $sep><AlignIcon kind="center" /></ToolBtn>
              <ToolBtn><AlignIcon kind="right" /></ToolBtn>
            </Strip>
            <Strip>
              <ToolBtn $sep><IndentIcon out /></ToolBtn>
              <ToolBtn><IndentIcon /></ToolBtn>
            </Strip>
          </ToolRow>
        </Rows>
        <Divider />
        <Rows>
          <SmallBtn><WrapIcon />Zawijaj tekst</SmallBtn>
          <SmallBtn><MergeIcon />Scal i wyśrodkuj<Arrow /></SmallBtn>
        </Rows>
      </Group>

      <Group label="Liczba" width={136} launcher>
        <Rows>
          <ToolRow><SelectBox name="Format" value="Ogólne" width={128} /></ToolRow>
          <ToolRow>
            <Strip>
              <ToolBtn $width={34} $sep><MoneyIcon /><Arrow /></ToolBtn>
              <ToolBtn $sep>%</ToolBtn>
              <ToolBtn>000</ToolBtn>
            </Strip>
            <Strip>
              <ToolBtn $sep><DecimalIcon /></ToolBtn>
              <ToolBtn><DecimalIcon less /></ToolBtn>
            </Strip>
          </ToolRow>
        </Rows>
      </Group>

      <Group label="Style" width={212}>
        <BigButton width={79} icon={<CondIcon />} lines={['Formatowanie', 'warunkowe']} />
        <BigButton width={70} icon={<FormatTableIcon />} lines={['Formatuj', 'jako tabelę']} />
        <BigButton width={55} icon={<CellStyleIcon />} lines={['Style', 'komórki']} />
      </Group>

      <Group label="Komórki" width={134}>
        <BigButton width={42} icon={<InsertIcon />} lines={['Wstaw', '']} />
        <BigButton width={42} icon={<DeleteIcon />} lines={['Usuń', '']} />
        <BigButton width={42} icon={<FormatIcon />} lines={['Format', '']} />
      </Group>

      <Group label="Edycja" width={222}>
        <SmallList $width={118} $left={4}>
          <SmallBtn><SumIcon />Autosumowanie<Arrow /></SmallBtn>
          <SmallBtn><FillDownIcon />Wypełnienie<Arrow /></SmallBtn>
          <SmallBtn><EraserIcon />Wyczyść<Arrow /></SmallBtn>
        </SmallList>
        <BigButton width={45} icon={<SortIcon />} lines={['Sortuj i', 'filtruj']} />
        <BigButton width={49} icon={<FindIcon />} lines={['Znajdź i', 'zaznacz']} />
      </Group>
    </Ribbon>
  )
}

function SheetRow({ n }) {
  return (
    <tr>
      <RowHead scope="row" $active={n === 13}>{n}</RowHead>
      {columns.map(([c]) => {
        const { t, ...rest } = cells[c + n] || {}
        return <Cell key={c} $height={heights[n] || 17} {...rest}>{t}</Cell>
      })}
    </tr>
  )
}

function App() {
  return (
    <Window>
      <GlobalStyle />
      <TitleBar>
        <OfficeButton aria-label="Office"><OfficeLogo /></OfficeButton>
        <QuickAccess>
          <QuickPill>
            <SaveIcon />
            <UndoIcon />
            <Arrow color="#a9c2e4" />
            <UndoIcon redo />
            <Arrow color="#c3ccd6" />
          </QuickPill>
          <QuickMore aria-label="Dostosuj"><MoreIcon /></QuickMore>
        </QuickAccess>
        <Title>Obliczenia_public_pepcio - Microsoft Excel</Title>
        <WindowButtons>
          <WindowButton aria-label="Minimalizuj">
            <svg width="12" height="12"><path d="M1 7.500h10v3H1z" fill="#fff" stroke="#444" strokeWidth=".6" /></svg>
          </WindowButton>
          <WindowButton aria-label="Przywróć">
            <svg width="12" height="12" fill="none" stroke="#fff" strokeWidth="1.500"><path d="M4 3V1h7v7H9M1.500 4h7v7h-7zM4 6.500h2v2H4z" /></svg>
          </WindowButton>
          <WindowButton $close aria-label="Zamknij">
            <svg width="12" height="11"><path d="M2 2l8 7M10 2L2 9" stroke="#fff" strokeWidth="3" /></svg>
          </WindowButton>
        </WindowButtons>
      </TitleBar>

      <TabBar>
        {tabs.map(([name, pad, active]) => <Tab key={name} $pad={pad} $active={active}>{name}</Tab>)}
        <TabIcons>
          <HelpIcon />
          <svg width="8" height="10"><path d="M0 7h7v2H0z" fill="#6b7788" /></svg>
          <svg width="10" height="10" fill="none" stroke="#6b7788"><path d="M2 3V1.500h7v4H8M.5 3.500h7v4h-7z" /><path d="M0 4h8" /></svg>
          <svg width="10" height="10"><path d="M1 1l7 8M8 1L1 9" stroke="#6b7788" strokeWidth="2" /></svg>
        </TabIcons>
      </TabBar>

      <RibbonBar />

      <FormulaBar>
        <NameBox>
          <input aria-label="Pole nazwy" defaultValue="C13" />
          <svg width="7" height="4"><path d="M0 0h7L3.500 4z" fill="#000" /></svg>
        </NameBox>
        <FxBox><Knob /><Fx>f<small>x</small></Fx></FxBox>
        <FormulaInput aria-label="Pasek formuły" defaultValue="Root" />
        <ExpandBtn aria-label="Rozwiń">
          <svg width="8" height="9" fill="none" stroke="#000" strokeWidth="1.500"><path d="M1 1l3 3 3-3M1 5l3 3 3-3" /></svg>
        </ExpandBtn>
      </FormulaBar>

      <SheetArea>
        <SheetPane>
          <Sheet>
            <colgroup>
              <Col $width={26} />
              {columns.map(([c, w]) => <Col key={c} $width={w} />)}
            </colgroup>
            <thead>
              <tr>
                <Corner><svg width="10" height="10"><path d="M10 0v10H0z" fill="#e9f0f9" /></svg></Corner>
                {columns.map(([c]) => <ColHead key={c} scope="col" $active={c === 'C'}>{c}</ColHead>)}
              </tr>
            </thead>
            <tbody>
              {Array.from({ length: 25 }, (_, i) => <SheetRow key={i} n={i + 1} />)}
            </tbody>
          </Sheet>
          <LogoCard>
            <LogoBig>ADW</LogoBig>
            <LogoSmall>AERO DESIGN WORKS</LogoSmall>
          </LogoCard>
        </SheetPane>
        <VScroll>
          <SplitV />
          <ScrollBtn aria-label="W górę"><Triangle dir="up" /></ScrollBtn>
          <VTrack>
            <VThumb>
              <svg width="8" height="8"><path d="M0 .5h8M0 2.500h8M0 4.500h8M0 6.500h8" stroke="#5f6b7d" /></svg>
            </VThumb>
          </VTrack>
          <ScrollBtn aria-label="W dół"><Triangle dir="down" /></ScrollBtn>
        </VScroll>
      </SheetArea>

      <SheetTabs>
        <NavButtons>
          <button aria-label="Pierwszy"><NavIcon dir="left" bar /></button>
          <button aria-label="Poprzedni"><NavIcon dir="left" /></button>
          <button aria-label="Następny"><NavIcon dir="right" /></button>
          <button aria-label="Ostatni"><NavIcon dir="right" bar /></button>
        </NavButtons>
        <SheetTab>Obliczenia</SheetTab>
        <NewSheet aria-label="Wstaw arkusz"><NewSheetIcon /></NewSheet>
        <HScroll>
          <SplitH />
          <ScrollBtn $side aria-label="W lewo"><Triangle dir="left" /></ScrollBtn>
          <HTrack>
            <HThumb>
              <svg width="8" height="8"><path d="M.5 0v8M2.500 0v8M4.500 0v8M6.500 0v8" stroke="#5f6b7d" /></svg>
            </HThumb>
          </HTrack>
          <ScrollBtn $side aria-label="W prawo"><Triangle dir="right" /></ScrollBtn>
          <SplitH />
        </HScroll>
        <CornerGap />
      </SheetTabs>

      <StatusBar>
        <StatusText>Gotowy</StatusText>
        <StatusRight>
          <ViewButtons>
            <ViewBtn $on aria-label="Normalny"><ViewIcon kind="grid" /></ViewBtn>
            <ViewBtn aria-label="Układ strony"><ViewIcon kind="page" /></ViewBtn>
            <ViewBtn aria-label="Podział stron"><ViewIcon kind="break" /></ViewBtn>
          </ViewButtons>
          <ZoomText>89%</ZoomText>
          <ZoomBtn aria-label="Pomniejsz"><ZoomIcon /></ZoomBtn>
          <ZoomSlider aria-label="Powiększenie" min="0" max="100" defaultValue="44" />
          <ZoomBtn aria-label="Powiększ"><ZoomIcon plus /></ZoomBtn>
        </StatusRight>
      </StatusBar>
    </Window>
  )
}

export default App;
